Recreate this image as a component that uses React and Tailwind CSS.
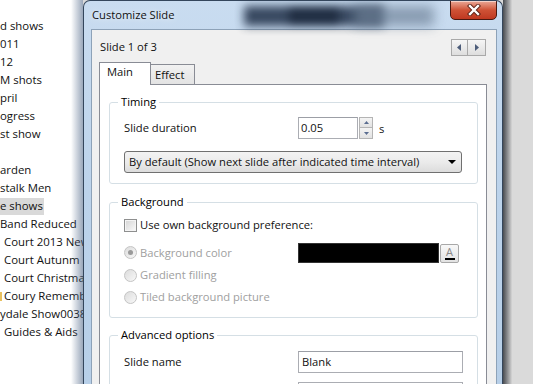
import React from "react";

const listItems = [
  { t: "d shows" },
  { t: "011" },
  { t: "12" },
  { t: "M shots" },
  { t: "pril" },
  { t: "ogress" },
  { t: "st show" },
  { t: "" },
  { t: "arden" },
  { t: "stalk Men" },
  { t: "e shows", sel: true },
  { t: "Band Reduced" },
  { t: "Court 2013 New", ind: true },
  { t: "Court Autunm", ind: true },
  { t: "Court Christma", ind: true },
  { t: "Coury Rememb", ind: true, icon: true },
  { t: "ydale Show0038" },
  { t: "Guides & Aids", ind: true },
];

function Radio({ checked }) {
  return (
    <span className="w-[13px] h-[13px] rounded-full border border-[#c4c4c4] bg-gradient-to-br from-[#dcdcdc] to-[#f8f8f8] flex items-center justify-center shrink-0">
      {checked && <span className="w-[5px] h-[5px] rounded-full bg-[#9a9a9a]" />}
    </span>
  );
}

function Group({ title, children, className = "" }) {
  return (
    <fieldset className={"border border-[#d5dfe5] rounded-[3px] p-0 m-0 " + className}>
      <legend className="ml-[8px] px-[3px] leading-[16px] text-black">{title}</legend>
      <div className="px-[14px]">{children}</div>
    </fieldset>
  );
}

export default function App() {
  return (
    <div className="w-[533px] h-[384px] overflow-hidden flex bg-[#dadada] font-['Open_Sans',sans-serif] text-[11.2px] text-[#111]">
      {/* left explorer list */}
      <div className="w-[83px] shrink-0 bg-white relative overflow-hidden">
        <div className="pt-[17px] flex flex-col">
          {listItems.map((it, i) => (
            <div key={i} className={"h-[18px] flex items-center whitespace-nowrap text-[11.4px] " + (it.ind ? "pl-[4px]" : "")}>
              {it.icon && <span className="absolute left-0 w-[2px] h-[9px] bg-[#e8c060]" />}
              {it.sel ? <span className="bg-[#d9d9d9] h-[17px] flex items-center pr-[1px]">{it.t}</span> : it.t}
            </div>
          ))}
        </div>
        <div className="absolute inset-y-0 right-0 w-[12px] bg-gradient-to-r from-[rgba(120,140,170,0)] to-[rgba(70,95,130,0.55)]" />
      </div>

      {/* dialog window */}
      <div className="w-[420px] h-full shrink-0 flex flex-col bg-gradient-to-b from-[#c9dcf0] via-[#bcd3eb] to-[#b7cfe8] border border-b-0 border-[#34465c] rounded-t-[7px] relative overflow-hidden">
        {/* title bar */}
        <div className="h-[28px] shrink-0 flex items-start relative">
          <div className="absolute left-[160px] top-[5px] w-[140px] h-[20px] bg-[#1f2f47] blur-[5px] opacity-85" />
          <div className="absolute left-[270px] top-[5px] w-[80px] h-[20px] bg-[#6f8298] blur-[6px] opacity-70" />
          <div className="absolute left-[205px] top-[8px] w-[50px] h-[14px] bg-[#0f1a2c] blur-[4px] opacity-60" />
          <span className="relative mt-[6px] pl-[8px] leading-[16px] text-[#111] [text-shadow:0_0_6px_rgba(255,255,255,0.9)]">
            Customize Slide
          </span>
          <div className="relative ml-auto mr-[5px] -mt-px w-[47px] h-[20px] rounded-b-[5px] border border-[#4a1810] bg-gradient-to-b from-[#e9a897] via-[#cf5236] to-[#bf3820] flex items-center justify-center shadow-[inset_0_1px_0_rgba(255,255,255,0.5)]">
            <svg width="14" height="12" viewBox="0 0 14 12">
              <path d="M3 2 L11 10 M11 2 L3 10" stroke="#5a2015" strokeWidth="4.2" strokeLinecap="square" />
              <path d="M3 2 L11 10 M11 2 L3 10" stroke="#ffffff" strokeWidth="2.4" strokeLinecap="square" />
            </svg>
          </div>
        </div>

        {/* client area */}
        <div className="flex-1 ml-[7px] mr-[5px] border border-b-0 border-[#8da2b8] bg-[#f0f0f0] flex flex-col min-h-0">
          <div className="pt-[9px] pl-[8px] pr-[10px] h-[26px] flex items-end shrink-0">
            <div className="h-[17px] flex items-center flex-1">Slide 1 of 3</div>
            <div className="flex h-[17px]">
              <div className="w-[17px] h-[17px] border border-[#a9a9a9] bg-gradient-to-b from-[#f6f6f6] to-[#dedede] flex items-center justify-center">
                <svg width="5" height="7" viewBox="0 0 5 7"><path d="M4 0 L0 3.5 L4 7 Z" fill="#4d5d7a" /></svg>
              </div>
              <div className="w-[18px] h-[17px] border border-l-0 border-[#a9a9a9] bg-gradient-to-b from-[#f6f6f6] to-[#dedede] flex items-center justify-center">
                <svg width="5" height="7" viewBox="0 0 5 7"><path d="M1 0 L5 3.5 L1 7 Z" fill="#4d5d7a" /></svg>
              </div>
            </div>
          </div>

          {/* tabs */}
          <div className="mt-[6px] pl-[7px] h-[22px] flex items-start shrink-0 relative z-10">
            <div className="w-[52px] h-[23px] border border-b-0 border-[#898c95] bg-white flex items-center pl-[7px] pb-[3px]">Main</div>
            <div className="mt-[2px] w-[44px] h-[20px] border border-l-0 border-b-0 border-[#898c95] bg-gradient-to-b from-[#f2f2f2] to-[#e3e3e3] flex items-center pl-[4px] pt-[2px]">Effect</div>
          </div>

          {/* panel */}
          <div className="flex-1 ml-[7px] mr-[9px] border border-b-0 border-[#898c95] bg-white pl-[9px] pr-[8px] pt-[9px]">
            <Group title="Timing">
              <div className="mt-[7px] h-[22px] flex items-center">
                <span className="w-[174px]">Slide duration</span>
                <div className="w-[60px] h-[22px] border border-[#abadb3] border-t-[#9c9fa6] bg-white flex items-center pl-[2px]">0.05</div>
                <div className="ml-[1px] w-[14px] h-[22px] flex flex-col">
                  <div className="h-[11px] border border-[#b4b4b4] bg-gradient-to-b from-[#f4f4f4] to-[#e2e2e2] flex items-center justify-center">
                    <svg width="5" height="3" viewBox="0 0 5 3"><path d="M0 3 L2.5 0 L5 3 Z" fill="#5a6d90" /></svg>
                  </div>
                  <div className="h-[11px] border border-t-0 border-[#b4b4b4] bg-gradient-to-b from-[#f4f4f4] to-[#e2e2e2] flex items-center justify-center">
                    <svg width="5" height="3" viewBox="0 0 5 3"><path d="M0 0 L2.5 3 L5 0 Z" fill="#5a6d90" /></svg>
                  </div>
                </div>
                <span className="ml-[6px] mt-[3px]">s</span>
              </div>
              <div className="mt-[12px] mb-[10px] w-[338px] h-[22px] rounded-[3px] border border-[#707070] bg-gradient-to-b from-[#f3f3f3] via-[#ebebeb] to-[#dcdcdc] flex items-center pl-[4px] pr-[5px]">
                <span className="flex-1 whitespace-nowrap">By default (Show next slide after indicated time interval)</span>
                <svg width="8" height="4" viewBox="0 0 8 4"><path d="M0 0 L8 0 L4 4 Z" fill="#000" /></svg>
              </div>
            </Group>

            <Group title="Background" className="mt-[10px]">
              <div className="mt-[4px] h-[22px] flex items-center">
                <span className="w-[13px] h-[13px] border border-[#8e8f8f] bg-gradient-to-br from-[#d4d4d4] to-[#fbfbfb] shadow-[inset_0_0_0_1px_#f4f4f4] shrink-0" />
                <span className="ml-[3px]">Use own background preference:</span>
              </div>
              <div className="mt-[6px] mb-[9px] flex flex-col text-[#a0a0a0]">
                <div className="h-[22px] flex items-center">
                  <span className="w-[174px] flex items-center">
                    <Radio checked />
                    <span className="ml-[3px]">Background color</span>
                  </span>
                  <div className="w-[141px] h-[20px] bg-black border border-[#333]" />
                  <div className="ml-[1px] w-[19px] h-[19px] rounded-[2px] border border-[#a8a8a8] bg-gradient-to-b from-[#f8f8f8] to-[#e2e2e2] flex flex-col items-center justify-center">
                    <span className="text-[11px] leading-[11px] text-[#888]">A</span>
                    <span className="w-[10px] h-[2px] bg-black mt-px" />
                  </div>
                </div>
                <div className="h-[22px] flex items-center">
                  <Radio />
                  <span className="ml-[3px]">Gradient filling</span>
                </div>
                <div className="h-[22px] flex items-center">
                  <Radio />
                  <span className="ml-[3px]">Tiled background picture</span>
                </div>
              </div>
            </Group>

            <Group title="Advanced options" className="mt-[9px]">
              <div className="mt-[8px] h-[22px] flex items-center">
                <span className="w-[174px]">Slide name</span>
                <div className="w-[165px] h-[22px] border border-[#abadb3] border-t-[#9c9fa6] bg-white flex items-center pl-[3px]">Blank</div>
              </div>
              <div className="mt-[9px] h-[22px] flex items-center">
                <span className="w-[174px]" />
                <div className="w-[165px] h-[22px] border border-[#abadb3] bg-white" />
              </div>
            </Group>
          </div>
        </div>
      </div>

      {/* right shadow + background */}
      <div className="w-[9px] shrink-0 bg-gradient-to-r from-[#4a4d52] to-[#d6d6d6]" />
      <div className="flex-1 bg-[#dadada]" />
    </div>
  );
}
